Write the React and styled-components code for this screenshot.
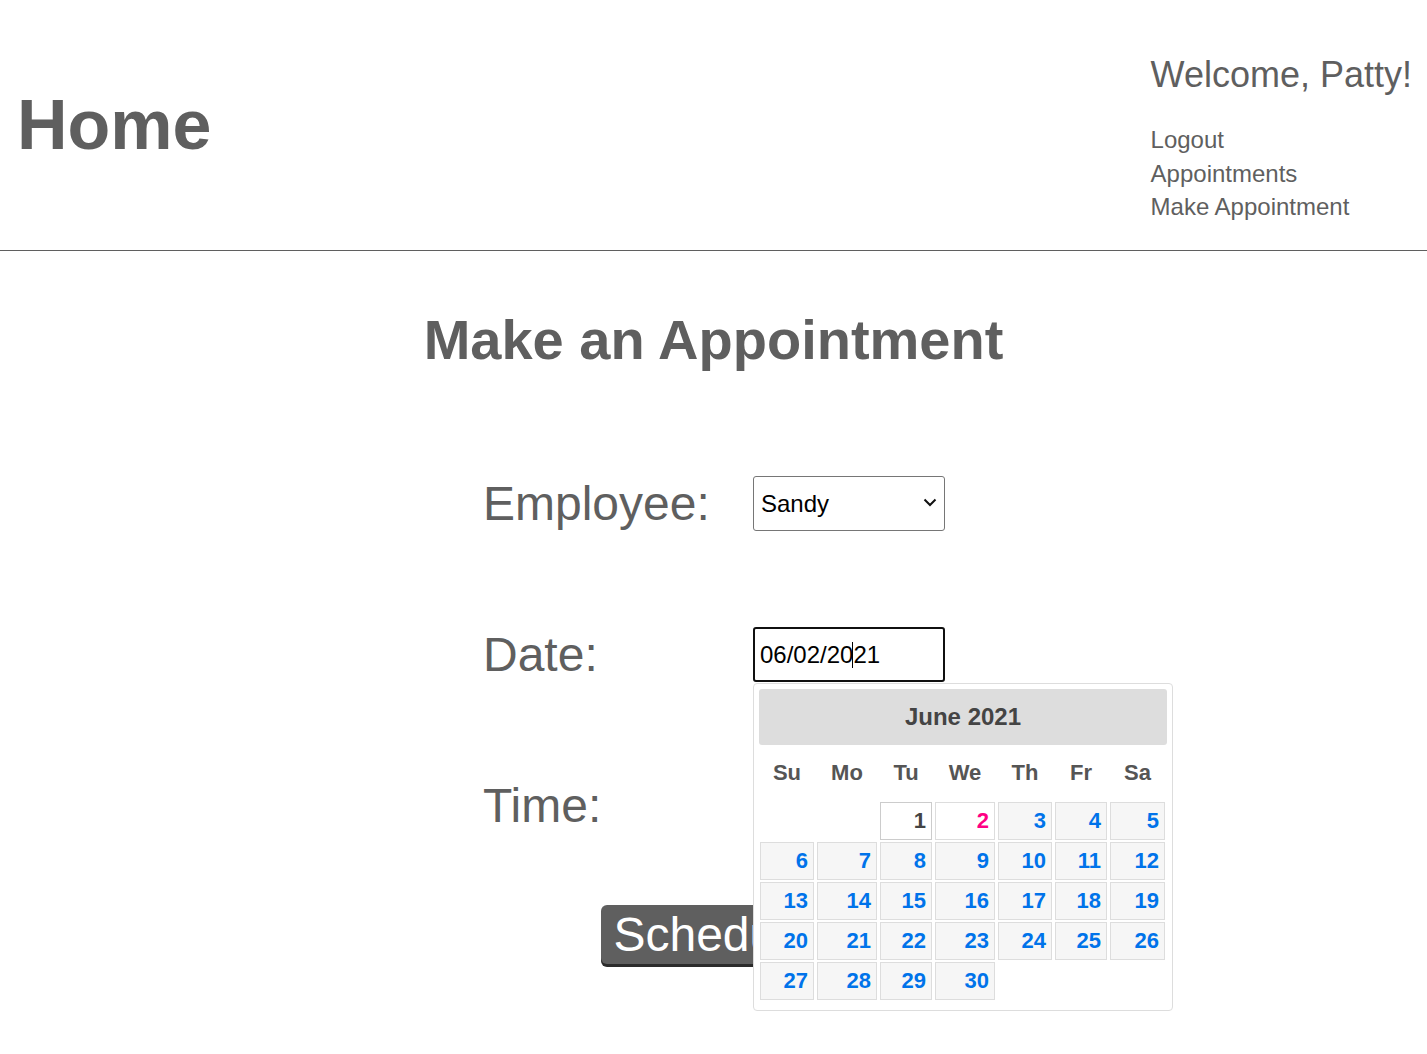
import React from 'react';
import styled, { createGlobalStyle } from 'styled-components';

const GlobalStyle = createGlobalStyle`
  html, body { margin: 0; padding: 0; background: #ffffff; }
  body { font-family: "Liberation Sans", Arial, Helvetica, sans-serif; color: #5f5f5f; }
  #root { min-height: 1054px; }
  *, *::before, *::after { box-sizing: border-box; }
`;

const Page = styled.div`
  min-height: 1054px;
`;

const Header = styled.header`
  display: flex;
  justify-content: space-between;
  align-items: flex-start;
  height: 251px;
  padding: 0 15px 0 17px;
  border-bottom: 1px solid #5f5f5f;
`;

const Brand = styled.h1`
  margin: 85px 0 0;
  font-size: 70px;
  line-height: 80px;
  font-weight: 700;
  color: #5f5f5f;
`;

const Account = styled.div`
  display: flex;
  flex-direction: column;
  padding-top: 54px;
`;

const Welcome = styled.p`
  margin: 0 0 27px;
  font-size: 36px;
  line-height: 42px;
  color: #5f5f5f;
`;

const NavLink = styled.a`
  display: block;
  font-size: 24px;
  line-height: 33.5px;
  color: #5f5f5f;
  text-decoration: none;
`;

const Main = styled.main`
  display: flex;
  flex-direction: column;
  align-items: center;
`;

const Title = styled.h2`
  margin: 57px 0 0;
  font-size: 56px;
  line-height: 64px;
  font-weight: 700;
  color: #5f5f5f;
  text-align: center;
`;

const Form = styled.form`
  display: flex;
  flex-direction: column;
  align-items: center;
  margin-top: 104px;
`;

const Fields = styled.div`
  display: grid;
  grid-template-columns: 271px 192px;
  row-gap: 96px;
  align-items: center;
`;

const Label = styled.label`
  padding-left: 1px;
  font-size: 48px;
  line-height: 55px;
  color: #5f5f5f;
`;

const SelectWrap = styled.div`
  position: relative;
  width: 192px;
  height: 55px;
`;

const Select = styled.select`
  appearance: none;
  width: 192px;
  height: 55px;
  padding: 0 30px 0 7px;
  font-family: "Liberation Sans", Arial, sans-serif;
  font-size: 24px;
  color: #000;
  background: #fff;
  border: 1px solid #767676;
  border-radius: 3px;
`;

const Chevron = styled.svg`
  position: absolute;
  right: 8px;
  top: 22px;
  width: 14px;
  height: 9px;
  pointer-events: none;
`;

const DateWrap = styled.div`
  position: relative;
  width: 192px;
  height: 55px;
`;

const TextInput = styled.input`
  width: 192px;
  height: 55px;
  padding: 0 5px;
  font-family: "Liberation Sans", Arial, sans-serif;
  font-size: 24px;
  color: #000;
  background: #fff;
  border: ${p => (p.$focused ? '2px solid #101010' : '1px solid #767676')};
  border-radius: 3px;
  outline: none;
`;

const Caret = styled.span`
  position: absolute;
  left: 99px;
  top: 15px;
  width: 1px;
  height: 26px;
  background: #000;
`;

const Picker = styled.div`
  position: absolute;
  top: calc(100% + 1px);
  left: 0;
  z-index: 10;
  width: 420px;
  padding: 5px 5px 10px;
  background: #fff;
  border: 1px solid #dddddd;
  border-radius: 4px;
  font-family: "Liberation Sans", Arial, sans-serif;
  font-weight: 700;
  font-size: 22px;
`;

const PickerHeader = styled.div`
  height: 56px;
  display: flex;
  align-items: center;
  justify-content: center;
  background: #dddddd;
  border-radius: 3px;
  font-size: 24px;
  color: #444444;
`;

const Calendar = styled.div`
  display: grid;
  grid-template-columns: 54px 60px 52px 60px 54px 52px 55px;
  grid-auto-rows: 38px;
  grid-template-rows: 55px;
  column-gap: 3px;
  row-gap: 2px;
  margin: 0 1px;
`;

const DayName = styled.div`
  display: flex;
  align-items: center;
  justify-content: center;
  color: #555555;
`;

const Day = styled.a`
  display: block;
  height: 38px;
  padding: 0 5px;
  line-height: 36px;
  text-align: right;
  text-decoration: none;
  border: 1px solid ${p => (p.$kind === 'today' ? '#cccccc' : '#dddddd')};
  background: ${p => (p.$kind === 'default' ? '#f6f6f6' : '#ffffff')};
  color: ${p => (p.$kind === 'today' ? '#444444' : p.$kind === 'selected' ? '#ff0084' : '#0073ea')};
`;

const Empty = styled.div``;

const Button = styled.button`
  margin-top: 72px;
  height: 59px;
  padding: 0 12px;
  font-family: "Liberation Sans", Arial, sans-serif;
  font-size: 48px;
  line-height: 59px;
  color: #ffffff;
  background: #5f5f5f;
  border: none;
  border-radius: 6px;
  box-shadow: 0 3px 0 #2b2b2b;
  cursor: pointer;
`;

const dayNames = ['Su', 'Mo', 'Tu', 'We', 'Th', 'Fr', 'Sa'];
const days = Array.from({ length: 30 }, (_, i) => i + 1);

export default function App() {
  return (
    <Page>
      <GlobalStyle />
      <Header>
        <Brand>Home</Brand>
        <Account>
          <Welcome>Welcome, Patty!</Welcome>
          <NavLink href="#">Logout</NavLink>
          <NavLink href="#">Appointments</NavLink>
          <NavLink href="#">Make Appointment</NavLink>
        </Account>
      </Header>
      <Main>
        <Title>Make an Appointment</Title>
        <Form onSubmit={e => e.preventDefault()}>
          <Fields>
            <Label htmlFor="employee">Employee:</Label>
            <SelectWrap>
              <Select id="employee" defaultValue="Sandy">
                <option>Sandy</option>
                <option>Patty</option>
              </Select>
              <Chevron viewBox="0 0 14 9" aria-hidden="true">
                <path d="M1.5 1.5 L7 7 L12.5 1.5" fill="none" stroke="#111" strokeWidth="2" />
              </Chevron>
            </SelectWrap>

            <Label htmlFor="date">Date:</Label>
            <DateWrap>
              <TextInput id="date" $focused readOnly value="06/02/2021" />
              <Caret />
              <Picker>
                <PickerHeader>June 2021</PickerHeader>
                <Calendar>
                  {dayNames.map(d => (
                    <DayName key={d}>{d}</DayName>
                  ))}
                  <Empty />
                  <Empty />
                  {days.map(d => (
                    <Day
                      key={d}
                      href="#"
                      $kind={d === 1 ? 'today' : d === 2 ? 'selected' : 'default'}
                    >
                      {d}
                    </Day>
                  ))}
                </Calendar>
              </Picker>
            </DateWrap>

            <Label htmlFor="time">Time:</Label>
            <TextInput id="time" type="time" />
          </Fields>
          <Button type="submit">Schedule</Button>
        </Form>
      </Main>
    </Page>
  );
}
